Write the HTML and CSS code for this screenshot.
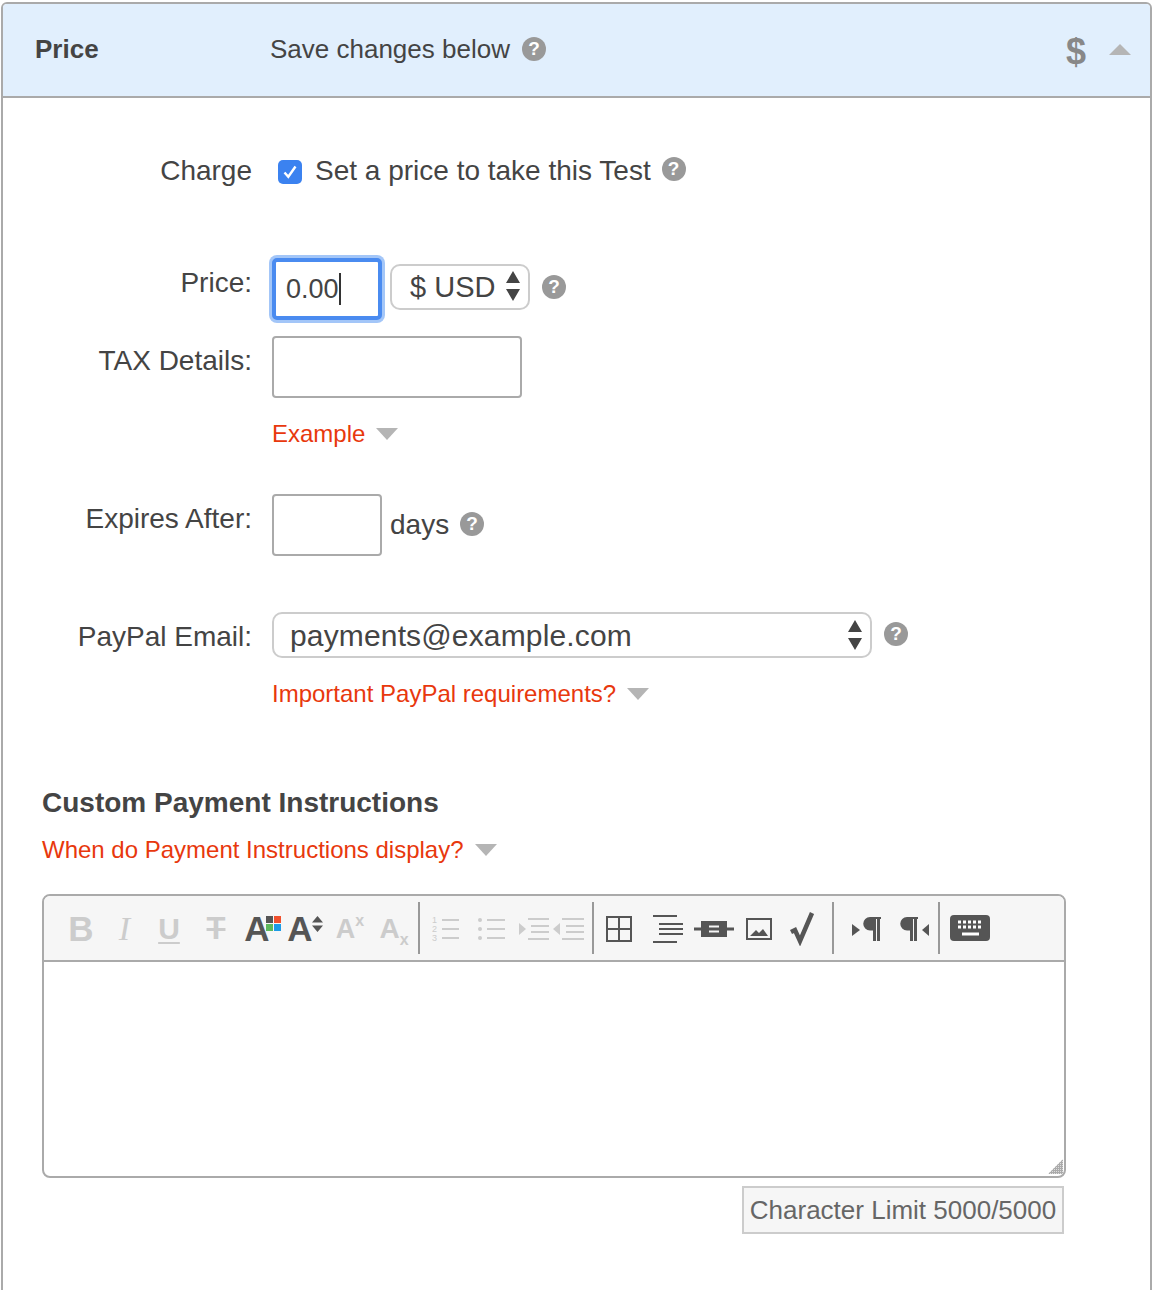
FILE: index.html
```html
<!DOCTYPE html>
<html lang="en">
<head>
  <meta charset="UTF-8">
  <title>Price</title>
  <link rel="stylesheet" href="styles.css">
</head>
<body>
  <div class="panel">
    <div class="panel-header">
      <div class="panel-title">Price</div>
      <div class="panel-note">Save changes below</div>
      <span class="help help-note">?</span>
      <span class="panel-dollar">$</span>
      <span class="caret-up"></span>
    </div>

    <div class="panel-body">
      <div class="row row-charge">
        <div class="row-label">Charge</div>
        <div class="row-field">
          <span class="checkbox">
            <svg width="24" height="24" viewBox="0 0 24 24"><path d="M6.500 12.500l3.800 4.300L17.500 6.500" fill="none" stroke="#fff" stroke-width="2.400"/></svg>
          </span>
          <span class="charge-text">Set a price to take this Test</span>
          <span class="help help-charge">?</span>
        </div>
      </div>

      <div class="row row-price">
        <div class="row-label">Price:</div>
        <div class="row-field">
          <div class="input input-focus">0.00<span class="text-cursor"></span></div>
          <div class="select select-currency">
            <span>$ USD</span>
            <svg class="updown" width="14" height="30" viewBox="0 0 14 30"><path d="M7 0l7 12H0zM7 30L0 18h14z" fill="#444"/></svg>
          </div>
          <span class="help help-price">?</span>
        </div>
      </div>

      <div class="row row-tax">
        <div class="row-label">TAX Details:</div>
        <div class="row-field"><input class="input input-tax" type="text"></div>
      </div>

      <div class="row row-link row-example">
        <div class="row-label"></div>
        <div class="row-field"><a class="link" href="#">Example</a><span class="caret-down"></span></div>
      </div>

      <div class="row row-expires">
        <div class="row-label">Expires After:</div>
        <div class="row-field">
          <input class="input input-days" type="text">
          <span class="days">days</span>
          <span class="help help-days">?</span>
        </div>
      </div>

      <div class="row row-paypal">
        <div class="row-label">PayPal Email:</div>
        <div class="row-field">
          <div class="select select-email">
            <span>payments@example.com</span>
            <svg class="updown" width="14" height="30" viewBox="0 0 14 30"><path d="M7 0l7 12H0zM7 30L0 18h14z" fill="#444"/></svg>
          </div>
          <span class="help help-email">?</span>
        </div>
      </div>

      <div class="row row-link row-important">
        <div class="row-label"></div>
        <div class="row-field"><a class="link" href="#">Important PayPal requirements?</a><span class="caret-down"></span></div>
      </div>

      <div class="custom">
        <h2 class="custom-title">Custom Payment Instructions</h2>
        <div class="custom-link"><a class="link" href="#">When do Payment Instructions display?</a><span class="caret-down"></span></div>

        <div class="editor">
          <div class="toolbar">
            <div class="tb w44 light"><span class="t-bold">B</span></div>
            <div class="tb w43 light"><span class="t-italic">I</span></div>
            <div class="tb w46 light"><span class="t-under">U</span></div>
            <div class="tb w48 light"><span class="t-strike">T</span></div>
            <div class="tb w44 dark">
              <span class="t-a">A</span>
              <svg class="a-swatch" width="15" height="15" viewBox="0 0 15 15">
                <rect width="7" height="7" fill="#555"/><rect x="8" width="7" height="7" fill="#f0502d"/>
                <rect y="8" width="7" height="7" fill="#5cb85c"/><rect x="8" y="8" width="7" height="7" fill="#1c9be6"/>
              </svg>
            </div>
            <div class="tb w42 dark">
              <span class="t-a">A</span>
              <svg class="a-swatch" width="11" height="16" viewBox="0 0 11 16"><path d="M5.500 0L11 6.500H0zM5.500 16L0 9.500h11z" fill="#555"/></svg>
            </div>
            <div class="tb w44 light"><span class="t-a-small">A</span><span class="t-x t-sup">x</span></div>
            <div class="tb w48 light"><span class="t-a-sub">A</span><span class="t-x t-sub">x</span></div>
            <div class="sep"></div>

            <div class="tb w52 light">
              <svg width="28" height="26" viewBox="0 0 28 26">
                <text class="ol-num" x="0" y="7">1</text><text class="ol-num" x="0" y="16">2</text><text class="ol-num" x="0" y="25">3</text>
                <path d="M10 4h17M10 13h17M10 22h17" stroke="#ccc" stroke-width="2"/>
              </svg>
            </div>
            <div class="tb w38 light">
              <svg width="27" height="24" viewBox="0 0 27 24">
                <path d="M9 3h18M9 12h18M9 21h18" stroke="#ccc" stroke-width="2"/>
                <circle cx="2" cy="3" r="2" fill="#ccc"/><circle cx="2" cy="12" r="2" fill="#ccc"/><circle cx="2" cy="21" r="2" fill="#ccc"/>
              </svg>
            </div>
            <div class="tb w82 light tb-indent">
              <svg width="31" height="22" viewBox="0 0 31 22">
                <path d="M0 5l7 6-7 6z" fill="#ccc"/>
                <path d="M9 1h21M12 8h18M12 14h18M9 21h21" stroke="#ccc" stroke-width="2"/>
              </svg>
              <svg width="31" height="22" viewBox="0 0 31 22">
                <path d="M7 5l-7 6 7 6z" fill="#ccc"/>
                <path d="M9 1h22M13 8h18M13 14h18M9 21h22" stroke="#ccc" stroke-width="2"/>
              </svg>
            </div>
            <div class="sep"></div>

            <div class="tb w50">
              <svg width="26" height="26" viewBox="0 0 26 26"><path d="M1 1h24v24H1zM13 1v24M1 13h24" fill="none" stroke="#555" stroke-width="2"/></svg>
            </div>
            <div class="tb w49">
              <svg width="31" height="28" viewBox="0 0 31 28"><path d="M0 1h24M6 9h24M6 14h24M6 19h24M0 27h24" stroke="#555" stroke-width="2"/></svg>
            </div>
            <div class="tb w42">
              <svg width="40" height="16" viewBox="0 0 40 16"><path d="M0 8h9M31 8h9" stroke="#555" stroke-width="3"/><path d="M9 2h22v12H9z" fill="#555" stroke="#555" stroke-width="4"/><path d="M15 5.500h10M15 10.500h10" stroke="#f6f6f6" stroke-width="2"/></svg>
            </div>
            <div class="tb w48">
              <svg width="26" height="22" viewBox="0 0 26 22"><path d="M1 1h24v20H1z" fill="none" stroke="#555" stroke-width="2"/><path d="M4 18l6-6 3 3 4-4 5 7z" fill="#555"/></svg>
            </div>
            <div class="tb w38">
              <svg width="25" height="34" viewBox="0 0 25 34"><path d="M1 20l4-2 5 11L22 1" fill="none" stroke="#555" stroke-width="4.500"/></svg>
            </div>
            <div class="sep sep-wide"></div>

            <div class="tb w64">
              <svg width="29" height="24" viewBox="0 0 29 24">
                <path d="M0 7l8 6-8 6z" fill="#555"/>
                <path d="M18 0h11v2h-1v22h-3V2h-1v22h-3V13.500h-3a6.750 6.750 0 0 1 0-13.500z" fill="#555"/>
              </svg>
            </div>
            <div class="tb w32">
              <svg width="29" height="24" viewBox="0 0 29 24">
                <path d="M7 0h11v2h-1v22h-3V2h-1v22h-3V13.500H7A6.750 6.750 0 0 1 7 0z" fill="#555"/>
                <path d="M29 7l-7 6 7 6z" fill="#555"/>
              </svg>
            </div>
            <div class="sep sep-last"></div>
            <div class="tb w60">
              <svg class="keyboard" width="40" height="26" viewBox="0 0 40 26">
                <rect width="40" height="26" rx="4" fill="#555"/>
                <path d="M8 7h25M8 12h25" stroke="#fff" stroke-width="3" stroke-dasharray="3 2"/>
                <path d="M12 19h17" stroke="#fff" stroke-width="3"/>
              </svg>
            </div>
          </div>
          <div class="editor-area">
            <svg class="grip" width="15" height="15" viewBox="0 0 15 15">
              <defs><pattern id="gripdots" width="2" height="2" patternUnits="userSpaceOnUse"><rect width="2" height="2" fill="#aaa"/><rect width="1" height="1" fill="#ddd"/></pattern></defs>
              <path d="M15 0v15H0z" fill="url(#gripdots)"/>
            </svg>
          </div>
        </div>

        <div class="char-limit">Character Limit 5000/5000</div>
      </div>
    </div>
  </div>
</body>
</html>
```
FILE: styles.css
```css
html, body {
    margin: 0;
    height: 1290px;
    overflow: hidden;
    background-color: #ffffff;
}
body {
    font-family: "Liberation Sans", Arial, sans-serif;
    color: #444;
}

.panel {
    box-sizing: border-box;
    width: 1151px;
    height: 1330px;
    margin: 2px 0 0 1px;
    border: 2px solid #aaa;
    border-radius: 6px;
}
.panel-header {
    display: flex;
    align-items: center;
    box-sizing: border-box;
    height: 94px;
    padding: 0 0 2px 32px;
    background-color: #e1effd;
    border-bottom: 2px solid #aaa;
    border-radius: 4px 4px 0 0;
}
.panel-title {
    width: 235px;
    font-size: 26px;
    font-weight: bold;
}
.panel-note {
    font-size: 26px;
}
.panel-dollar {
    margin: 6px 0 0 auto;
    font-size: 36px;
    font-weight: bold;
    color: #888;
}
.caret-up {
    width: 0;
    height: 0;
    margin: 0 19px 0 23px;
    border-left: 11px solid transparent;
    border-right: 11px solid transparent;
    border-bottom: 11px solid #b5b5b5;
}
.caret-down {
    width: 0;
    height: 0;
    margin-left: 11px;
    border-left: 11px solid transparent;
    border-right: 11px solid transparent;
    border-top: 12px solid #b5b5b5;
}

.help {
    display: inline-flex;
    align-items: center;
    justify-content: center;
    width: 24px;
    height: 24px;
    border-radius: 50%;
    background-color: #999;
    color: #fff;
    font-size: 19px;
    font-weight: bold;
}
.help-note { margin: 0 0 0 12px; }
.help-charge { margin: -4px 0 0 11px; }
.help-price { margin: -4px 0 0 12px; }
.help-days { margin: -2px 0 0 11px; }
.help-email { margin: -2px 0 0 12px; }

.panel-body {
    padding-top: 49px;
}
.row {
    display: grid;
    grid-template-columns: 249px 1fr;
    column-gap: 20px;
    font-size: 28px;
}
.row-label {
    line-height: 50px;
    text-align: right;
}
.row-field {
    display: flex;
    align-items: center;
}
.row-charge { height: 48px; }
.row-charge .row-label { line-height: 48px; }
.row-price { margin-top: 63px; height: 62px; }
.row-tax { margin-top: 16px; height: 62px; }
.row-example { margin-top: 20px; }
.row-expires { margin-top: 44px; height: 62px; }
.row-paypal { margin-top: 56px; height: 46px; }
.row-paypal .row-field { align-self: start; height: 46px; }
.row-important { margin-top: 20px; }
.row-link { height: 32px; }

.checkbox {
    display: flex;
    width: 24px;
    height: 24px;
    margin: 2px 13px 0 6px;
    border-radius: 5px;
    background-color: #3b82f0;
}

.input {
    box-sizing: border-box;
    height: 62px;
    border: 2px solid #aaa;
    border-radius: 4px;
    background-color: #fff;
    font: inherit;
    color: inherit;
    outline: none;
}
.input-focus {
    display: flex;
    align-items: center;
    width: 110px;
    padding-left: 10px;
    border: 4px solid #4a8bf0;
    box-shadow: 0 0 0 3px #a3c6f8;
    border-radius: 5px;
    font-size: 27px;
}
.text-cursor {
    width: 2px;
    height: 32px;
    margin-left: 0;
    background-color: #333;
}
.input-tax { width: 250px; }
.input-days { width: 110px; }
.days { margin-left: 8px; }

.select {
    display: flex;
    align-items: center;
    justify-content: space-between;
    box-sizing: border-box;
    height: 46px;
    border: 2px solid #ccc;
    border-radius: 10px;
    font-size: 29px;
    background-color: #fff;
}
.select-currency {
    width: 140px;
    margin: -4px 0 0 8px;
    padding: 0 8px 0 18px;
}
.select-email {
    width: 600px;
    padding: 2px 8px 0 16px;
    font-size: 30px;
    letter-spacing: 0.15px;
}
.updown { margin-top: -2px; }

.link {
    font-size: 24px;
    color: #e8380d;
    text-decoration: none;
}

.custom {
    margin: 73px 0 0 39px;
}
.custom-title {
    margin: 0;
    font-size: 28px;
    line-height: 40px;
}
.custom-link {
    display: flex;
    align-items: center;
    height: 32px;
    margin-top: 11px;
}

.editor {
    box-sizing: border-box;
    width: 1024px;
    height: 284px;
    margin-top: 28px;
    border: 2px solid #aaa;
    border-radius: 8px;
}
.toolbar {
    display: flex;
    align-items: center;
    box-sizing: border-box;
    height: 66px;
    padding-left: 15px;
    background-color: #f6f6f6;
    border-bottom: 2px solid #aaa;
    border-radius: 6px 6px 0 0;
}
.tb {
    position: relative;
    display: flex;
    align-items: center;
    justify-content: center;
    height: 52px;
    padding-top: 2px;
    flex: none;
}
.w32 { width: 32px; }
.w38 { width: 38px; }
.w42 { width: 42px; }
.w43 { width: 43px; }
.w44 { width: 44px; }
.w46 { width: 46px; }
.w48 { width: 48px; }
.w49 { width: 49px; }
.w50 { width: 50px; }
.w52 { width: 52px; }
.w60 { width: 60px; }
.w64 { width: 64px; }
.w82 { width: 82px; }
.tb-indent { gap: 3px; }
.light { color: #ccc; }
.dark { color: #555; }
.sep {
    flex: none;
    width: 2px;
    height: 52px;
    background-color: #999;
}
.sep-wide { margin-left: 11px; }
.sep-last { margin-left: 8px; }
.keyboard { margin-top: -2px; }

.t-bold { font-size: 35px; font-weight: bold; }
.t-italic { font-family: "Liberation Serif", serif; font-size: 34px; font-style: italic; }
.t-under { font-size: 30px; font-weight: bold; text-decoration: underline; text-decoration-thickness: 2px; text-underline-offset: 3px; }
.t-strike { font-size: 31px; font-weight: bold; text-decoration: line-through; text-decoration-thickness: 3px; }
.t-a { font-size: 35px; font-weight: bold; margin-right: 10px; }
.t-a-small { font-size: 27px; font-weight: bold; margin-left: 4px; }
.t-a-sub { font-size: 28px; font-weight: bold; }
.t-x {
    font-size: 16px;
    font-weight: bold;
}
.t-sup { margin-top: -16px; }
.t-sub { margin-top: 22px; }
.a-swatch {
    position: absolute;
    top: 15px;
    right: 3px;
}
.ol-num {
    font-size: 9px;
    fill: #ccc;
}

.editor-area {
    position: relative;
    height: 214px;
}
.grip {
    position: absolute;
    right: 1px;
    bottom: 2px;
}

.char-limit {
    box-sizing: border-box;
    width: 322px;
    height: 48px;
    margin: 8px 0 0 700px;
    border: 2px solid #ccc;
    background-color: #f6f6f6;
    color: #666;
    font-size: 26px;
    line-height: 44px;
    text-align: center;
}
```
